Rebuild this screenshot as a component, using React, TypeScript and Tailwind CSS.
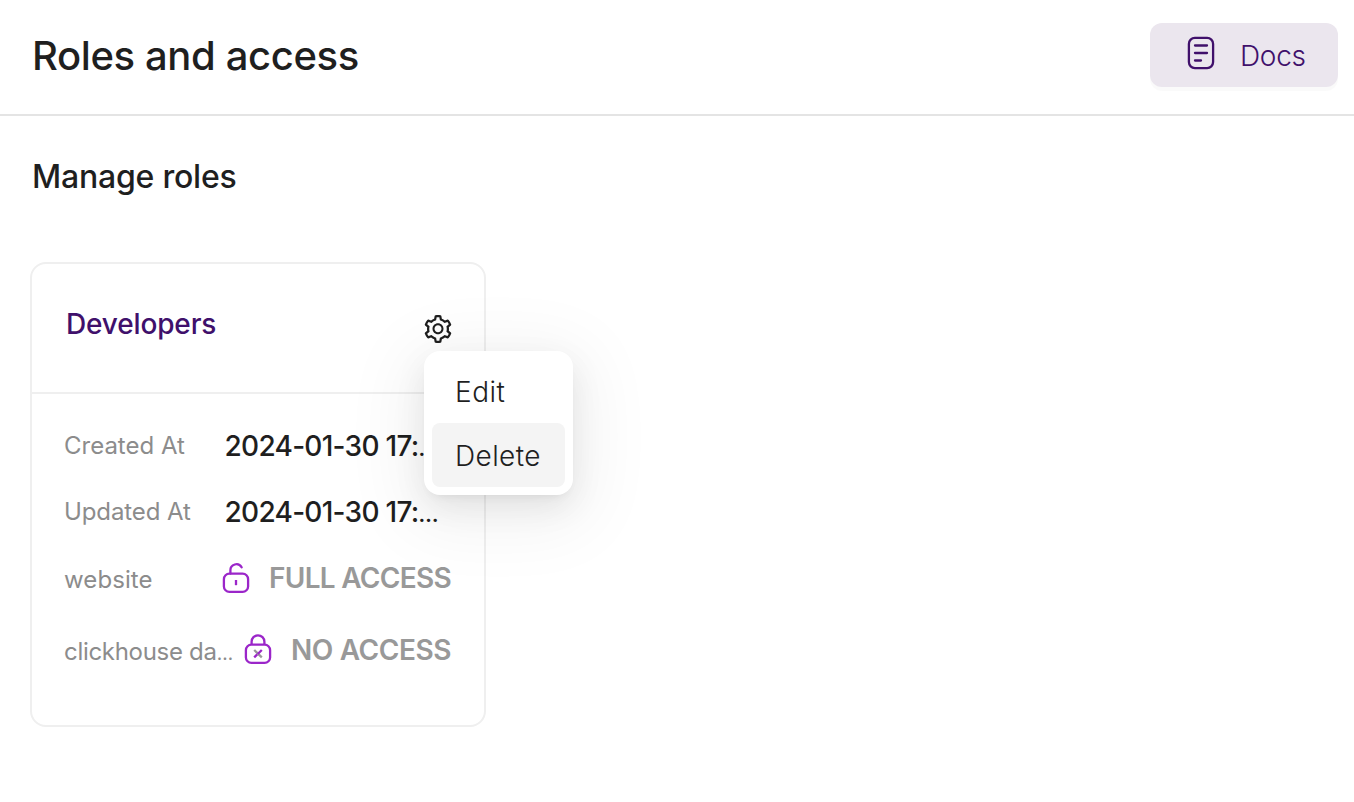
import { AiOutlineSetting } from "react-icons/ai";

function DocsIcon() {
  return (
    <svg width="28" height="34" viewBox="0 0 28 34" fill="none" stroke="#40106b" strokeWidth="2.3" strokeLinecap="round">
      <rect x="1.9" y="1.9" width="24.2" height="30.2" rx="6" />
      <path d="M8 9.5h12M8 17h12M8 24.5h6" />
    </svg>
  );
}

function LockIcon({ open }: { open?: boolean }) {
  return (
    <svg className="shrink-0" width="28" height="32" viewBox="0 0 28 32" fill="none" stroke="#9b26c9" strokeWidth="2.3">
      <rect x="1.9" y="11.7" width="24.2" height="18.2" rx="5.5" />
      {open ? (
        <>
          <path d="M8.4 11.5V8.5a6 6 0 0 1 11.2-3.2" strokeLinecap="round" />
          <path d="M14 18v5.2" />
        </>
      ) : (
        <>
          <path d="M7.6 11.5V8.7a6.4 6.4 0 0 1 12.8 0v2.8" />
          <path d="M10.2 17l7.6 7.4" stroke="#999" />
          <path d="M10.2 24.4l3-3M17.8 17l-4 4" />
        </>
      )}
    </svg>
  );
}

function DateValue({ children }: { children: string }) {
  return (
    <dd className="font-medium tracking-[-0.72px]">
      {children}
      <span className="text-[20px] font-bold tracking-normal">…</span>
    </dd>
  );
}

export default function App() {
  return (
    <div className="h-[802px] w-[1354px] overflow-hidden bg-white font-['Inter',sans-serif] text-[#1f1f1f]">
      <header className="flex h-[116px] items-start justify-between border-b-2 border-[#e4e4e4] pt-[23px] pr-4 pl-8">
        <h1 className="mt-[9px] text-[40px] leading-[48px] font-medium tracking-[-0.38px] whitespace-nowrap">Roles and access</h1>
        <button className="flex h-16 w-[188px] items-center rounded-xl bg-[#ebe6ee] pl-[37px] shadow-[0_4px_0_rgba(0,0,0,0.02)]">
          <span className="mb-1"><DocsIcon /></span>
          <span className="mt-0.5 ml-[25px] text-[28px] leading-10 font-light tracking-[-0.3px] text-[#40106b]">Docs</span>
        </button>
      </header>
      <main className="px-[30px]">
        <h2 className="mt-10 ml-0.5 text-[32px] leading-[42px] font-medium tracking-[-0.22px]">Manage roles</h2>
        <section className="mt-16 h-[465px] w-[456px] rounded-[16px] border-2 border-[#efefef]">
          <div className="flex h-[130px] items-start justify-between border-b-2 border-[#efefef] pt-10 pr-[30px] pl-[34px]">
            <h3 className="text-[28px] leading-10 font-medium tracking-[-0.15px] text-[#40106b]">Developers</h3>
            <div className="relative mt-[9px]">
              <AiOutlineSetting size={32} />
              <div className="absolute top-[38px] left-0.5 flex h-36 w-[149px] flex-col rounded-2xl bg-white p-2 text-[28px] font-light shadow-[0_12px_32px_rgba(0,0,0,0.08),0_6px_12px_-8px_rgba(0,0,0,0.12),0_14px_68px_20px_rgba(0,0,0,0.05)]">
                <div className="flex h-16 items-center pt-0.5 pl-[23px] tracking-[0.5px]">Edit</div>
                <div className="flex h-16 items-center rounded-lg bg-[#f4f4f4] pt-0.5 pl-[23px] tracking-[0.4px]">Delete</div>
              </div>
            </div>
          </div>
          <dl className="px-8 pt-8 text-[28px] whitespace-nowrap">
            <div className="flex h-10 items-center">
              <dt className="w-[160.5px] shrink-0 text-2xl text-[#8c8c8c]">Created At</dt>
              <DateValue>2024-01-30 17:</DateValue>
            </div>
            <div className="mt-[26px] flex h-10 items-center">
              <dt className="w-[160.5px] shrink-0 text-2xl tracking-[-0.1px] text-[#8c8c8c]">Updated At</dt>
              <DateValue>2024-01-30 17:</DateValue>
            </div>
            <div className="mt-7 flex h-10 items-center">
              <dt className="w-[158px] shrink-0 text-2xl tracking-[0.1px] text-[#8c8c8c]">website</dt>
              <dd className="mb-1 flex items-center font-semibold text-[#999]">
                <LockIcon open />
                <span className="ml-[19px] tracking-[-0.7px]">FULL ACCESS</span>
              </dd>
            </div>
            <div className="mt-8 flex h-10 items-center">
              <dt className="w-[180px] shrink-0 text-2xl tracking-[-0.3px] text-[#8c8c8c]">
                clickhouse da<span className="text-[19px]">…</span>
              </dt>
              <dd className="mb-[6px] flex items-center font-semibold text-[#999]">
                <LockIcon />
                <span className="mt-0.5 ml-[19px] tracking-[-0.4px]">NO ACCESS</span>
              </dd>
            </div>
          </dl>
        </section>
      </main>
    </div>
  );
}
